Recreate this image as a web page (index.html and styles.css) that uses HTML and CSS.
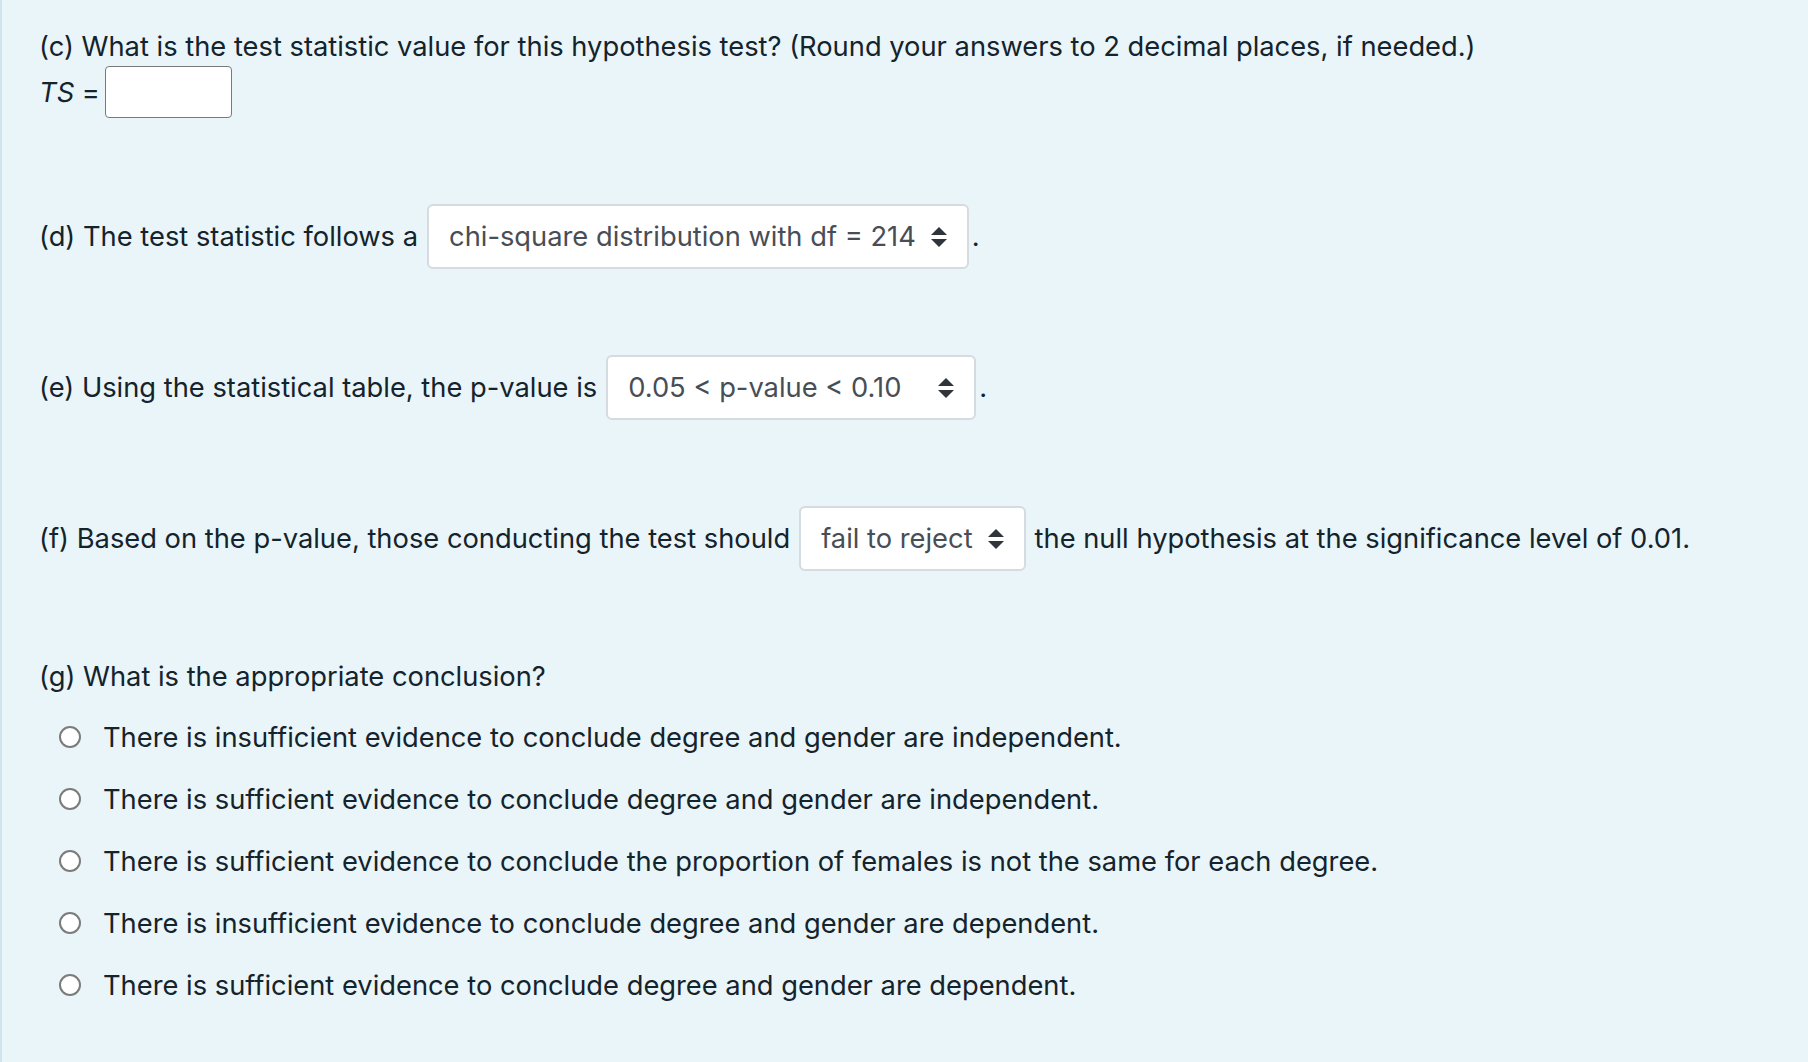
FILE: index.html
```html
<!DOCTYPE html>
<html lang="en">
<head>
<meta charset="utf-8">
<title>Hypothesis test</title>
<link rel="stylesheet" href="styles.css">
</head>
<body>
<main class="panel">
  <p class="line q-c">(c) What is the test statistic value for this hypothesis test? (Round your answers to 2 decimal places, if needed.)</p>
  <div class="row ts-row">
    <span><i>TS</i> =</span>
    <span class="input"></span>
  </div>

  <div class="row q">
    <span>(d) The test statistic follows a</span>
    <span class="select sel-d"><span class="sel-text">chi-square distribution with df = 214</span><svg class="arrows" viewBox="0 0 16 20" width="16" height="20"><polygon points="8,0 16,8 0,8"/><polygon points="0,12 16,12 8,20"/></svg></span>
    <span class="dot">.</span>
  </div>

  <div class="row q">
    <span>(e) Using the statistical table, the p-value is</span>
    <span class="select sel-e"><span class="sel-text">0.05 &lt; p-value &lt; 0.10</span><svg class="arrows" viewBox="0 0 16 20" width="16" height="20"><polygon points="8,0 16,8 0,8"/><polygon points="0,12 16,12 8,20"/></svg></span>
    <span class="dot">.</span>
  </div>

  <div class="row q">
    <span>(f) Based on the p-value, those conducting the test should</span>
    <span class="select sel-f"><span class="sel-text">fail to reject</span><svg class="arrows" viewBox="0 0 16 20" width="16" height="20"><polygon points="8,0 16,8 0,8"/><polygon points="0,12 16,12 8,20"/></svg></span>
    <span class="after">the null hypothesis at the significance level of 0.01.</span>
  </div>

  <p class="line q-g">(g) What is the appropriate conclusion?</p>
  <ul class="options">
    <li><span class="radio"></span><span>There is insufficient evidence to conclude degree and gender are independent.</span></li>
    <li><span class="radio"></span><span>There is sufficient evidence to conclude degree and gender are independent.</span></li>
    <li><span class="radio"></span><span>There is sufficient evidence to conclude the proportion of females is not the same for each degree.</span></li>
    <li><span class="radio"></span><span>There is insufficient evidence to conclude degree and gender are dependent.</span></li>
    <li><span class="radio"></span><span>There is sufficient evidence to conclude degree and gender are dependent.</span></li>
  </ul>
</main>
</body>
</html>
```

FILE: styles.css
```css
html, body {
  margin: 0;
  padding: 0;
}
body {
  background: #e9f5f8;
  font-family: Inter, "Noto Sans", sans-serif;
  font-size: 27.3px;
  line-height: 39px;
  color: #14232c;
}
.panel {
  min-height: 1062px;
  box-sizing: border-box;
  border-left: 2px solid #cfe4ec;
  padding: 27px 0 0 37px;
}
.line {
  margin: 0;
}
.row {
  display: flex;
  align-items: center;
}
.ts-row {
  margin-top: 0;
  height: 52px;
}
.ts-row i {
  font-style: italic;
}
.input {
  display: inline-block;
  width: 127px;
  height: 52px;
  box-sizing: border-box;
  margin-left: 5px;
  background: #fff;
  border: 1.5px solid #7a7a7a;
  border-radius: 4px;
}
.q {
  margin-top: 86px;
  height: 65px;
}
.select {
  display: inline-flex;
  align-items: center;
  height: 65px;
  box-sizing: border-box;
  margin-left: 9px;
  padding: 0 20px;
  background: #fff;
  border: 2px solid #d5dbdf;
  border-radius: 6px;
  color: #484e55;
}
.sel-text {
  flex: 1;
  white-space: nowrap;
}
.arrows {
  margin-left: 15px;
  fill: #2f353a;
  flex: none;
}
.sel-e {
  width: 370px;
}
.dot {
  margin-left: 3px;
}
.after {
  margin-left: 9px;
}
.q-g {
  margin-top: 86px;
}
.options {
  list-style: none;
  margin: 10px 0 0 0;
  padding: 0;
}
.options li {
  display: flex;
  align-items: center;
  height: 62px;
}
.radio {
  width: 22px;
  height: 22px;
  box-sizing: border-box;
  border: 2px solid #7b7b7b;
  border-radius: 50%;
  background: #fff;
  margin-left: 20px;
  margin-right: 22px;
  flex: none;
}
```
